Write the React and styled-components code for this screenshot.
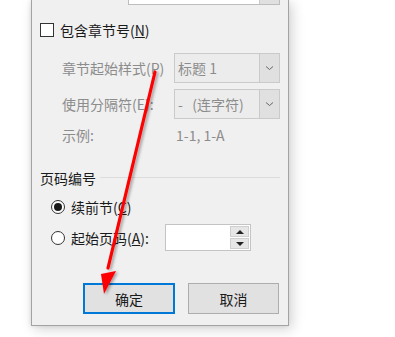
import styled, { createGlobalStyle } from "styled-components"

const Global = createGlobalStyle`
  html, body { margin: 0; padding: 0; background: #fff; }
  body { font-family: "Noto Sans CJK SC", "Noto Sans", sans-serif; }
`

const Page = styled.div`
  position: relative;
  width: 395px;
  height: 337px;
  overflow: hidden;
  background: #fff;
`

const Dialog = styled.div`
  margin-left: 31px;
  width: 258px;
  box-sizing: border-box;
  background: #f0f0f0;
  border: 1px solid #a3a3a3;
  border-top: none;
  padding: 0 8px 11px 8px;
  display: flex;
  flex-direction: column;
  box-shadow: 3px 3px 12px rgba(0, 0, 0, 0.18), -1px 0 4px rgba(0, 0, 0, 0.08);
  font-size: 14px;
  color: #1a1a1a;
`

const Select = styled.div`
  display: flex;
  box-sizing: border-box;
  width: ${p => p.$w}px;
  height: ${p => p.$h}px;
  margin-left: ${p => p.$ml || 0}px;
  margin-top: ${p => p.$mt || 0}px;
  border: 1px solid ${p => (p.$disabled ? "#cacaca" : "#bdbdbd")};
  background: ${p => (p.$disabled ? "#ececec" : "#fff")};
  color: #8c8c8c;
`

const SelectText = styled.div`
  flex: 1;
  display: flex;
  align-items: center;
  padding-left: 3px;
  white-space: pre;
`

const SelectButton = styled.div`
  width: 19px;
  display: flex;
  align-items: center;
  justify-content: center;
  background: #e0e0e0;
  border-left: 1px solid #cacaca;
`

const CheckRow = styled.label`
  display: flex;
  align-items: center;
  gap: 6px;
  height: 18px;
  margin-top: 16px;
`

const CheckBox = styled.span`
  width: 14px;
  height: 14px;
  box-sizing: border-box;
  border: 1px solid #333;
  background: #fff;
`

const FieldRow = styled.div`
  display: flex;
  align-items: center;
  margin-left: 22px;
  margin-top: ${p => p.$mt}px;
  height: ${p => p.$h || 30}px;
  color: #8c8c8c;
`

const FieldLabel = styled.div`
  width: 112px;
  white-space: nowrap;
`

const FieldValue = styled.div`
  padding-left: 2px;
`

const GroupHeader = styled.div`
  display: flex;
  align-items: center;
  gap: 4px;
  height: 18px;
  margin-top: 25px;
  &::after {
    content: "";
    flex: 1;
    height: 1px;
    margin-top: -1px;
    background: #dcdcdc;
  }
`

const RadioRow = styled.div`
  display: flex;
  align-items: center;
  margin-left: 11px;
  margin-top: ${p => p.$mt}px;
  height: ${p => p.$h || 18}px;
`

const RadioLabel = styled.label`
  display: flex;
  align-items: center;
  gap: 6px;
  width: ${p => (p.$w ? `${p.$w}px` : "auto")};
  white-space: nowrap;
`

const Radio = styled.span`
  width: 14px;
  height: 14px;
  box-sizing: border-box;
  border-radius: 50%;
  border: 1px solid #333;
  background: #fff;
  display: flex;
  align-items: center;
  justify-content: center;
  &::after {
    content: "";
    width: 8px;
    height: 8px;
    border-radius: 50%;
    background: ${p => (p.$checked ? "#1a1a1a" : "transparent")};
  }
`

const Spin = styled.div`
  display: flex;
  width: 86px;
  height: 27px;
  box-sizing: border-box;
  border: 1px solid #c4c4c4;
  background: #fff;
`

const SpinInput = styled.div`
  flex: 1;
`

const SpinButtons = styled.div`
  width: 19px;
  display: flex;
  flex-direction: column;
  gap: 1px;
  padding: 1px;
  background: #fff;
`

const SpinButton = styled.div`
  flex: 1;
  background: #e6e6e6;
  border: 1px solid #cfcfcf;
  display: flex;
  align-items: center;
  justify-content: center;
  &::after {
    content: "";
    border-left: 4px solid transparent;
    border-right: 4px solid transparent;
    ${p => (p.$up ? "border-bottom: 4px solid #222;" : "border-top: 4px solid #222;")}
  }
`

const ButtonRow = styled.div`
  display: flex;
  gap: 13px;
  margin-left: 43px;
  margin-top: 32px;
`

const Button = styled.button`
  width: ${p => p.$w}px;
  height: 31px;
  box-sizing: border-box;
  font-family: inherit;
  font-size: 14px;
  color: #1a1a1a;
  background: #e1e1e1;
  border: ${p => (p.$primary ? "2px solid #0078d7" : "1px solid #adadad")};
  padding: 0;
`

const Chevron = () => (
  <svg width="9" height="6" viewBox="0 0 9 6">
    <path d="M1 1.5 L4.5 4.5 L8 1.5" fill="none" stroke="#666" strokeWidth="1" />
  </svg>
)

const ArrowLayer = styled.svg`
  position: absolute;
  left: 0;
  top: 0;
  pointer-events: none;
`

const App = () => {
  return (
    <Page>
      <Global />
      <Dialog>
        <Select $w={152} $h={24} $ml={88} $mt={-19}>
          <SelectText />
          <SelectButton />
        </Select>

        <CheckRow>
          <CheckBox />
          <span>包含章节号(<u>N</u>)</span>
        </CheckRow>

        <FieldRow $mt={14}>
          <FieldLabel>章节起始样式(P)</FieldLabel>
          <Select $w={106} $h={30} $disabled>
            <SelectText>标题 1</SelectText>
            <SelectButton><Chevron /></SelectButton>
          </Select>
        </FieldRow>

        <FieldRow $mt={6}>
          <FieldLabel>使用分隔符(E):</FieldLabel>
          <Select $w={106} $h={30} $disabled>
            <SelectText>-   (连字符)</SelectText>
            <SelectButton><Chevron /></SelectButton>
          </Select>
        </FieldRow>

        <FieldRow $mt={7} $h={18}>
          <FieldLabel>示例:</FieldLabel>
          <FieldValue>1-1, 1-A</FieldValue>
        </FieldRow>

        <GroupHeader>页码编号</GroupHeader>

        <RadioRow $mt={11}>
          <RadioLabel>
            <Radio $checked />
            <span>续前节(<u>C</u>)</span>
          </RadioLabel>
        </RadioRow>

        <RadioRow $mt={8} $h={27}>
          <RadioLabel $w={114}>
            <Radio />
            <span>起始页码(<u>A</u>):</span>
          </RadioLabel>
          <Spin>
            <SpinInput />
            <SpinButtons>
              <SpinButton $up />
              <SpinButton />
            </SpinButtons>
          </Spin>
        </RadioRow>

        <ButtonRow>
          <Button $w={92} $primary>确定</Button>
          <Button $w={91}>取消</Button>
        </ButtonRow>
      </Dialog>

      <ArrowLayer width="395" height="337" viewBox="0 0 395 337">
        <defs>
          <filter id="sh" x="-50%" y="-10%" width="200%" height="120%">
            <feDropShadow dx="2" dy="1" stdDeviation="1.5" floodColor="#000" floodOpacity="0.35" />
          </filter>
        </defs>
        <g filter="url(#sh)">
          <line x1="155" y1="72" x2="108" y2="268" stroke="#ff0000" strokeWidth="3.2" strokeLinecap="round" />
          <polygon points="101,274 116,271 104,294" fill="#ff0000" />
        </g>
      </ArrowLayer>
    </Page>
  )
}

export default App
